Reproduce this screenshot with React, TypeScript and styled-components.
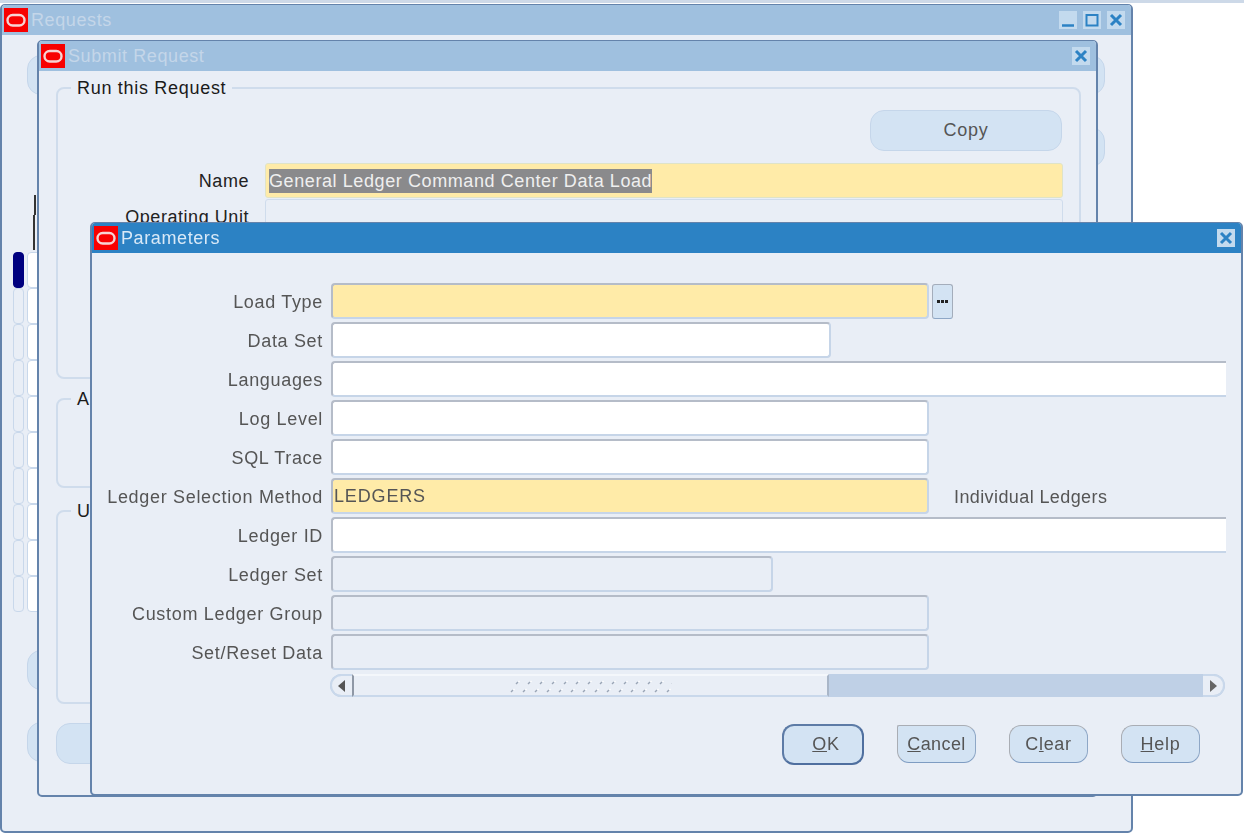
import React from "react";
import styled, { createGlobalStyle } from "styled-components";

const GlobalStyle = createGlobalStyle`
  * {
    box-sizing: border-box;
  }
  body {
    margin: 0;
    background: #ffffff;
    font-family: "Liberation Sans", Arial, sans-serif;
    overflow: hidden;
  }
`;

const Desktop = styled.div`
  position: relative;
  width: 1244px;
  height: 835px;
  overflow: hidden;
  border-top: 3px solid #cdd9e8;
  filter: blur(0.3px);
`;

const Window = styled.div<{ $x: number; $y: number; $w: number; $h: number }>`
  position: absolute;
  left: ${(p) => p.$x}px;
  top: ${(p) => p.$y}px;
  width: ${(p) => p.$w}px;
  height: ${(p) => p.$h}px;
  display: flex;
  flex-direction: column;
  background: #e9eef6;
  border: 2px solid #6483ab;
  border-top-width: 1px;
  border-radius: 5px;
  overflow: hidden;
`;

const TitleBar = styled.div<{ $active?: boolean }>`
  flex: none;
  height: 30px;
  display: flex;
  align-items: center;
  gap: 3px;
  padding: 0 6px 0 2px;
  background: ${(p) => (p.$active ? "#2c82c4" : "#9fc0df")};
  color: ${(p) => (p.$active ? "#d9e9f7" : "#c4d6e9")};
  font-size: 18px;
  letter-spacing: 0.6px;
`;

const TitleText = styled.span`
  flex: 1;
`;

const TitleButtons = styled.div`
  display: flex;
  gap: 6px;
`;

const TitleButton = styled.div`
  width: 18px;
  height: 18px;
  background: #c3daee;
  display: flex;
  align-items: center;
  justify-content: center;
`;

const OracleLogo = () => (
  <svg width="24" height="24" viewBox="0 0 24 24">
    <rect width="24" height="24" fill="#f80000" />
    <rect x="3.5" y="7" width="17" height="10.5" rx="5.2" fill="none" stroke="#f6d3d3" strokeWidth="2.4" />
  </svg>
);

const CloseIcon = () => (
  <svg width="14" height="14" viewBox="0 0 14 14">
    <path d="M2 2 L12 12 M12 2 L2 12" stroke="#2c82c4" strokeWidth="3" />
  </svg>
);

const MinimizeIcon = () => (
  <svg width="14" height="14" viewBox="0 0 14 14">
    <path d="M1 12.5 H13" stroke="#2c82c4" strokeWidth="2.4" />
  </svg>
);

const MaximizeIcon = () => (
  <svg width="14" height="14" viewBox="0 0 14 14">
    <rect x="1.5" y="2" width="11" height="10.5" fill="none" stroke="#2c82c4" strokeWidth="2" />
  </svg>
);

/* Requests window, mostly covered */
const RequestsBody = styled.div`
  display: flex;
  flex-direction: column;
  padding: 20px 26px 0 11px;
`;

const BackPill = styled.div<{ $top: number; $left?: number }>`
  height: 40px;
  margin-top: ${(p) => p.$top}px;
  margin-left: ${(p) => p.$left ?? 14}px;
  background: #d3e3f3;
  border: 1px solid #c5d6ea;
  border-radius: 14px;
`;

const Tick = styled.div<{ $left: number; $h: number }>`
  width: 2px;
  height: ${(p) => p.$h}px;
  margin-left: ${(p) => p.$left}px;
  background: #333333;
`;

const TickGroup = styled.div`
  display: flex;
  flex-direction: column;
  margin-top: 28px;
  height: 57px;
`;

const GridRows = styled.div`
  display: grid;
  grid-template-columns: 11px 1fr;
  grid-auto-rows: 36px;
  column-gap: 3px;
`;

const IndexCell = styled.div<{ $current?: boolean }>`
  background: ${(p) => (p.$current ? "#00007f" : "#e9eef6")};
  border: 1.5px solid ${(p) => (p.$current ? "#00007f" : "#c9d8eb")};
  border-radius: 4px;
`;

const ValueCell = styled.div`
  background: #ffffff;
  border: 1px solid #c9d8eb;
  border-radius: 4px;
`;

/* Submit Request window */
const SubmitBody = styled.div`
  display: flex;
  flex-direction: column;
  padding: 7px 15px 0 17px;
`;

const GroupBox = styled.fieldset<{ $h: number; $top?: number }>`
  height: ${(p) => p.$h}px;
  margin: ${(p) => p.$top ?? 0}px 0 0;
  padding: 0;
  border: 2px solid #cfdcec;
  border-radius: 8px;
  min-width: 0;
`;

const GroupTitle = styled.legend`
  margin-left: 13px;
  padding: 0 6px;
  font-size: 18px;
  letter-spacing: 0.7px;
  line-height: 20px;
  color: #1a1a1a;
`;

const CopyRow = styled.div`
  display: flex;
  justify-content: flex-end;
  padding: 12px 17px 0 0;
`;

const CopyButton = styled.div`
  width: 192px;
  height: 41px;
  display: flex;
  align-items: center;
  justify-content: center;
  background: #d3e3f3;
  border: 1px solid #c5d6ea;
  border-radius: 14px;
  color: #555555;
  font-size: 18px;
  letter-spacing: 0.8px;
`;

const SubmitRow = styled.div<{ $top: number }>`
  display: flex;
  align-items: center;
  gap: 16px;
  height: 35px;
  margin-top: ${(p) => p.$top}px;
`;

const SubmitLabel = styled.div`
  width: 191px;
  padding-top: 1px;
  text-align: right;
  font-size: 18px;
  letter-spacing: 0.55px;
  color: #222222;
  white-space: nowrap;
`;

const SubmitField = styled.div<{ $required?: boolean }>`
  width: 798px;
  height: 35px;
  display: flex;
  align-items: center;
  padding-left: 3px;
  background: ${(p) => (p.$required ? "#ffeba8" : "#e9eef6")};
  border: 1px solid ${(p) => (p.$required ? "#dfe3c8" : "#cfdcec")};
  border-radius: 3px;
`;

const SelectedText = styled.span`
  background: #8a8a8c;
  color: #efefef;
  font-size: 18px;
  letter-spacing: 0.59px;
  line-height: 24px;
  white-space: nowrap;
`;

const HiddenPill = styled.div`
  width: 260px;
  height: 41px;
  flex: none;
  margin-top: 19px;
  background: #d3e3f3;
  border: 1px solid #c5d6ea;
  border-radius: 14px;
`;

/* Parameters window */
const ParamBody = styled.div`
  flex: 1;
  display: flex;
  flex-direction: column;
  padding-top: 30px;
  margin-right: 15px;
  overflow: hidden;
`;

const ParamRows = styled.div`
  display: flex;
  flex-direction: column;
  gap: 3px;
`;

const ParamRow = styled.div`
  display: flex;
  align-items: center;
  height: 36px;
`;

const ParamLabel = styled.div`
  flex: none;
  width: 231px;
  margin-right: 8px;
  padding-top: 2px;
  text-align: right;
  font-size: 18px;
  letter-spacing: 0.68px;
  color: #555555;
  white-space: nowrap;
`;

type FieldKind = "required" | "plain" | "disabled";

const fieldBackgrounds: Record<FieldKind, string> = {
  required: "#ffeba8",
  plain: "#ffffff",
  disabled: "#e9eef6",
};

const ParamField = styled.div<{ $w: number; $kind: FieldKind }>`
  flex: none;
  width: ${(p) => p.$w}px;
  height: 36px;
  display: flex;
  align-items: center;
  padding: 1px 0 0 1px;
  background: ${(p) => fieldBackgrounds[p.$kind]};
  border: 2px solid #c6d5e8;
  border-top-color: #b5bcc8;
  border-left-color: #b5bcc8;
  border-radius: 4px;
  font-size: 18px;
  letter-spacing: 0.85px;
  color: #555555;
`;

const LovButton = styled.div`
  flex: none;
  width: 21px;
  height: 35px;
  margin-left: 3px;
  display: flex;
  align-items: center;
  justify-content: center;
  background: #d3e3f3;
  border: 1px solid #a4adbb;
  border-bottom-color: #8ea7c6;
  border-radius: 3px;
`;

const Description = styled.div`
  margin-left: 25px;
  padding-top: 2px;
  font-size: 18px;
  letter-spacing: 0.4px;
  color: #555555;
  white-space: nowrap;
`;

const ScrollBar = styled.div`
  flex: none;
  display: flex;
  width: 895px;
  height: 23px;
  margin: 4px 0 0 238px;
  background: #bfd0e6;
  border-radius: 12px;
  overflow: hidden;
`;

const ScrollEnd = styled.div<{ $side: "left" | "right" }>`
  flex: none;
  width: 22px;
  display: flex;
  align-items: center;
  justify-content: center;
  background: #e9eef6;
  border: 2px solid #c9d8eb;
  border-${(p) => (p.$side === "left" ? "right" : "left")}: none;
  border-radius: ${(p) => (p.$side === "left" ? "12px 0 0 12px" : "0 12px 12px 0")};
`;

const ScrollThumb = styled.div`
  flex: none;
  width: 477px;
  display: flex;
  align-items: center;
  justify-content: center;
  background: #e9eef6;
  border-top: 2px solid #f4f7fb;
  border-bottom: 2px solid #c9d8eb;
  border-left: 2px solid #8f98a6;
  border-right: 2px solid #a9b6c8;
`;

const ScrollTrack = styled.div`
  flex: 1;
`;

const ButtonBar = styled.div`
  flex: none;
  display: flex;
  align-items: center;
  justify-content: flex-end;
  gap: 33px;
  height: 42px;
  margin-top: 26px;
  padding-right: 26px;
`;

const DialogButton = styled.div<{ $default?: boolean; $w: number; $square?: boolean }>`
  width: ${(p) => p.$w}px;
  height: ${(p) => (p.$default ? 41 : 38)}px;
  display: flex;
  align-items: center;
  justify-content: center;
  padding-left: ${(p) => (p.$default ? 6 : 0)}px;
  background: #d3e3f3;
  border: ${(p) => (p.$default ? 2 : 1.5)}px solid ${(p) => (p.$default ? "#5d7ba6" : "#a9adb4")};
  border-right-color: ${(p) => (p.$default ? "#4f6f9f" : "#8ea7c6")};
  border-bottom-color: ${(p) => (p.$default ? "#4f6f9f" : "#7e9cc2")};
  border-radius: 12px;
  ${(p) => (p.$square ? "border-top-left-radius: 2px;" : "")}
  font-size: 18px;
  letter-spacing: ${(p) => (p.$square ? 0.4 : 0.7)}px;
  color: #555555;
`;

const ArrowLeft = () => (
  <svg width="8" height="12" viewBox="0 0 8 12">
    <path d="M7 0 V12 L0 6 Z" fill="#555555" />
  </svg>
);

const ArrowRight = () => (
  <svg width="8" height="12" viewBox="0 0 8 12">
    <path d="M1 0 V12 L8 6 Z" fill="#666666" />
  </svg>
);

const ThumbGrip = () => (
  <svg width="162" height="16" viewBox="0 0 162 16">
    <defs>
      <pattern id="grip" width="12" height="16" patternUnits="userSpaceOnUse">
        <path d="M6 6 L8 4" stroke="#9aa5b6" strokeWidth="1.5" />
        <path d="M1 14 L3 12" stroke="#9aa5b6" strokeWidth="1.5" />
        <path d="M8.5 4 L9.5 3" stroke="#ffffff" strokeWidth="1.2" />
        <path d="M3.5 12 L4.5 11" stroke="#ffffff" strokeWidth="1.2" />
      </pattern>
    </defs>
    <rect width="162" height="16" fill="url(#grip)" />
  </svg>
);

const LovDots = () => (
  <svg width="11" height="3" viewBox="0 0 11 3">
    <path d="M0 0h3v3H0zM4 0h3v3H4zM8 0h3v3H8z" fill="#222222" />
  </svg>
);

const params: { label: string; w: number; kind: FieldKind; value?: string; lov?: boolean; note?: string }[] = [
  { label: "Load Type", w: 598, kind: "required", lov: true },
  { label: "Data Set", w: 500, kind: "plain" },
  { label: "Languages", w: 910, kind: "plain" },
  { label: "Log Level", w: 598, kind: "plain" },
  { label: "SQL Trace", w: 598, kind: "plain" },
  { label: "Ledger Selection Method", w: 598, kind: "required", value: "LEDGERS", note: "Individual Ledgers" },
  { label: "Ledger ID", w: 910, kind: "plain" },
  { label: "Ledger Set", w: 442, kind: "disabled" },
  { label: "Custom Ledger Group", w: 598, kind: "disabled" },
  { label: "Set/Reset Data", w: 598, kind: "disabled" },
];

const App = () => {
  return (
    <>
      <GlobalStyle />
      <Desktop>
        <Window $x={0} $y={1} $w={1133} $h={829}>
          <TitleBar>
            <OracleLogo />
            <TitleText>Requests</TitleText>
            <TitleButtons>
              <TitleButton>
                <MinimizeIcon />
              </TitleButton>
              <TitleButton>
                <MaximizeIcon />
              </TitleButton>
              <TitleButton>
                <CloseIcon />
              </TitleButton>
            </TitleButtons>
          </TitleBar>
          <RequestsBody>
            <BackPill $top={0} />
            <BackPill $top={32} $left={300} />
            <TickGroup>
              <Tick $left={21} $h={20} />
              <Tick $left={20} $h={35} />
            </TickGroup>
            <GridRows>
              {Array.from({ length: 10 }, (_, i) => (
                <React.Fragment key={i}>
                  <IndexCell $current={i === 0} />
                  <ValueCell />
                </React.Fragment>
              ))}
            </GridRows>
            <BackPill $top={38} />
            <BackPill $top={32} />
          </RequestsBody>
        </Window>

        <Window $x={37} $y={37} $w={1061} $h={757}>
          <TitleBar>
            <OracleLogo />
            <TitleText>Submit Request</TitleText>
            <TitleButton>
              <CloseIcon />
            </TitleButton>
          </TitleBar>
          <SubmitBody>
            <GroupBox $h={301}>
              <GroupTitle>Run this Request</GroupTitle>
              <CopyRow>
                <CopyButton>Copy</CopyButton>
              </CopyRow>
              <SubmitRow $top={12}>
                <SubmitLabel>Name</SubmitLabel>
                <SubmitField $required>
                  <SelectedText>General Ledger Command Center Data Load</SelectedText>
                </SubmitField>
              </SubmitRow>
              <SubmitRow $top={1}>
                <SubmitLabel>Operating Unit</SubmitLabel>
                <SubmitField />
              </SubmitRow>
            </GroupBox>
            <GroupBox $h={99} $top={10}>
              <GroupTitle>A</GroupTitle>
            </GroupBox>
            <GroupBox $h={203} $top={13}>
              <GroupTitle>U</GroupTitle>
            </GroupBox>
            <HiddenPill />
          </SubmitBody>
        </Window>

        <Window $x={90} $y={219} $w={1153} $h={574}>
          <TitleBar $active>
            <OracleLogo />
            <TitleText>Parameters</TitleText>
            <TitleButton>
              <CloseIcon />
            </TitleButton>
          </TitleBar>
          <ParamBody>
            <ParamRows>
              {params.map((row) => (
                <ParamRow key={row.label}>
                  <ParamLabel>{row.label}</ParamLabel>
                  <ParamField $w={row.w} $kind={row.kind}>
                    {row.value}
                  </ParamField>
                  {row.lov && (
                    <LovButton>
                      <LovDots />
                    </LovButton>
                  )}
                  {row.note && <Description>{row.note}</Description>}
                </ParamRow>
              ))}
            </ParamRows>
            <ScrollBar>
              <ScrollEnd $side="left">
                <ArrowLeft />
              </ScrollEnd>
              <ScrollThumb>
                <ThumbGrip />
              </ScrollThumb>
              <ScrollTrack />
              <ScrollEnd $side="right">
                <ArrowRight />
              </ScrollEnd>
            </ScrollBar>
            <ButtonBar>
              <DialogButton $default $w={82}>
                <span>
                  <u>O</u>K
                </span>
              </DialogButton>
              <DialogButton $w={79} $square>
                <span>
                  <u>C</u>ancel
                </span>
              </DialogButton>
              <DialogButton $w={79}>
                <span>
                  C<u>l</u>ear
                </span>
              </DialogButton>
              <DialogButton $w={79}>
                <span>
                  <u>H</u>elp
                </span>
              </DialogButton>
            </ButtonBar>
          </ParamBody>
        </Window>
      </Desktop>
    </>
  );
};

export default App;
